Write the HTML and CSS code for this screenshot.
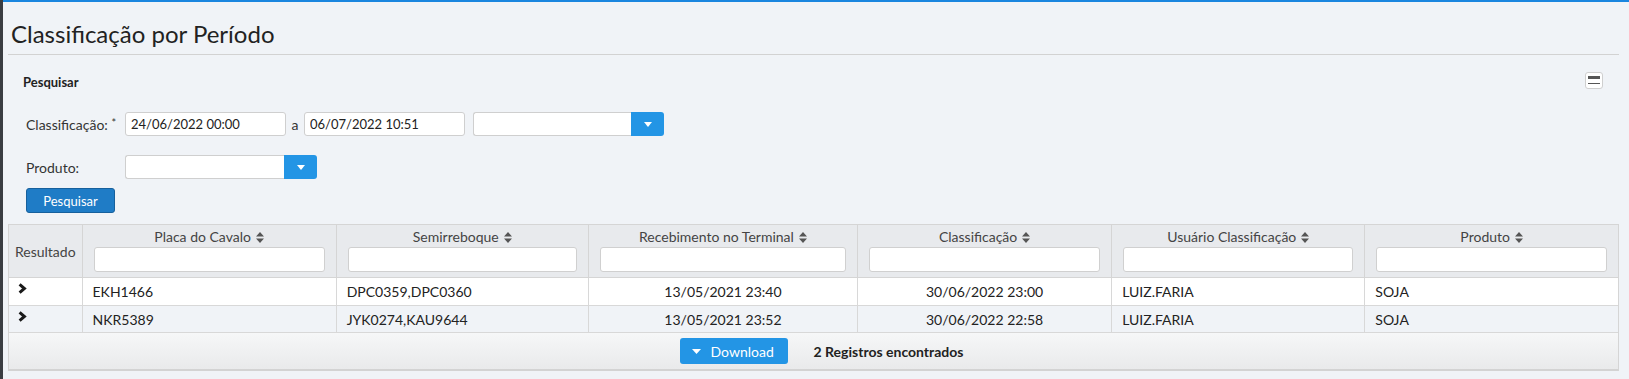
FILE: index.html
```html
<!DOCTYPE html>
<html lang="pt-BR">
<head>
<meta charset="utf-8">
<title>Classificação por Período</title>
<link rel="stylesheet" href="styles.css">
</head>
<body>
<div class="app">
  <div class="edge"></div>
  <div class="main">
    <h1 class="title">Classificação por Período</h1>
    <section class="panel">
      <div class="panel-head">
        <span class="panel-title">Pesquisar</span>
        <button class="toggle" type="button" aria-label="Recolher">
          <svg width="12" height="9" viewBox="0 0 12 9"><rect x="0" y="0" width="12" height="3" fill="#555"/><rect x="0" y="7" width="12" height="1" fill="#555"/></svg>
        </button>
      </div>
      <div class="form">
        <div class="form-row">
          <label class="lbl">Classificação: <sup>*</sup></label>
          <input class="field date" type="text" value="24/06/2022 00:00">
          <span class="sep">a</span>
          <input class="field date" type="text" value="06/07/2022 10:51">
          <div class="combo wide">
            <input class="field" type="text" value="">
            <button class="combo-btn" type="button"><svg width="8" height="5" viewBox="0 0 8 5"><path d="M0 0H8L4 5Z" fill="#fff"/></svg></button>
          </div>
        </div>
        <div class="form-row">
          <label class="lbl">Produto:</label>
          <div class="combo">
            <input class="field" type="text" value="">
            <button class="combo-btn" type="button"><svg width="8" height="5" viewBox="0 0 8 5"><path d="M0 0H8L4 5Z" fill="#fff"/></svg></button>
          </div>
        </div>
        <button class="btn-search" type="button">Pesquisar</button>
      </div>
    </section>

    <div class="grid">
      <table>
        <colgroup>
          <col style="width:73px"><col style="width:254px"><col style="width:252px"><col style="width:269px"><col style="width:254px"><col style="width:253px"><col style="width:253px">
        </colgroup>
        <thead>
          <tr>
            <th class="res">Resultado</th>
            <th><div class="th-label">Placa do Cavalo <svg class="sort" width="8" height="11" viewBox="0 0 8 11"><path d="M0 4.5H8L4 0Z M0 6.5H8L4 11Z" fill="#555"/></svg></div><input class="filter" type="text"></th>
            <th><div class="th-label">Semirreboque <svg class="sort" width="8" height="11" viewBox="0 0 8 11"><path d="M0 4.5H8L4 0Z M0 6.5H8L4 11Z" fill="#555"/></svg></div><input class="filter" type="text"></th>
            <th><div class="th-label">Recebimento no Terminal <svg class="sort" width="8" height="11" viewBox="0 0 8 11"><path d="M0 4.5H8L4 0Z M0 6.5H8L4 11Z" fill="#555"/></svg></div><input class="filter" type="text"></th>
            <th><div class="th-label">Classificação <svg class="sort" width="8" height="11" viewBox="0 0 8 11"><path d="M0 4.5H8L4 0Z M0 6.5H8L4 11Z" fill="#555"/></svg></div><input class="filter" type="text"></th>
            <th><div class="th-label">Usuário Classificação <svg class="sort" width="8" height="11" viewBox="0 0 8 11"><path d="M0 4.5H8L4 0Z M0 6.5H8L4 11Z" fill="#555"/></svg></div><input class="filter" type="text"></th>
            <th><div class="th-label">Produto <svg class="sort" width="8" height="11" viewBox="0 0 8 11"><path d="M0 4.5H8L4 0Z M0 6.5H8L4 11Z" fill="#555"/></svg></div><input class="filter" type="text"></th>
          </tr>
        </thead>
        <tbody>
          <tr class="odd">
            <td class="exp"><svg width="9" height="11" viewBox="0 0 9 11"><path d="M1.6 1.4L6.4 5.5L1.6 9.6" fill="none" stroke="#1a1a1a" stroke-width="3"/></svg></td>
            <td>EKH1466</td>
            <td>DPC0359,DPC0360</td>
            <td class="c">13/05/2021 23:40</td>
            <td class="c">30/06/2022 23:00</td>
            <td>LUIZ.FARIA</td>
            <td>SOJA</td>
          </tr>
          <tr class="even">
            <td class="exp"><svg width="9" height="11" viewBox="0 0 9 11"><path d="M1.6 1.4L6.4 5.5L1.6 9.6" fill="none" stroke="#1a1a1a" stroke-width="3"/></svg></td>
            <td>NKR5389</td>
            <td>JYK0274,KAU9644</td>
            <td class="c">13/05/2021 23:52</td>
            <td class="c">30/06/2022 22:58</td>
            <td>LUIZ.FARIA</td>
            <td>SOJA</td>
          </tr>
        </tbody>
      </table>
      <div class="grid-foot">
        <button class="btn-dl" type="button"><svg width="9" height="5" viewBox="0 0 9 5"><path d="M0 0H9L4.5 5Z" fill="#fff"/></svg>Download</button>
        <span class="count">2 Registros encontrados</span>
      </div>
    </div>
  </div>
</div>
</body>
</html>
```

FILE: styles.css
```css
* { box-sizing: border-box; }
html, body { margin: 0; padding: 0; }
body {
  background: #f0f3f7;
  font-family: Lato, "Liberation Sans", sans-serif;
  font-size: 13px;
  color: #333;
  width: 1629px;
  height: 379px;
  overflow: hidden;
}
.app { display: flex; height: 379px; }
.edge { width: 3px; flex: none; background: #3a3d42; }
.main {
  flex: 1;
  border-top: 2px solid #1a86df;
  padding: 0 10px 0 5px;
}
.title {
  margin: 0;
  font-weight: 400;
  font-size: 24px;
  line-height: 29px;
  color: #222;
  padding: 17px 0 6px 3px;
  border-bottom: 1px solid #d2d2d2;
}
.panel { padding: 0; }
.panel-head {
  display: flex;
  align-items: center;
  justify-content: space-between;
  padding: 17px 16px 0 15px;
  height: 36px;
}
.panel-title { font-weight: 700; font-size: 13px; color: #222; }
.toggle {
  width: 18px; height: 17px;
  padding: 0;
  border: 1px solid #cfcfcf;
  border-radius: 3px;
  background: #fff;
  display: flex; align-items: center; justify-content: center;
  margin-top: -2px;
}
.form { padding: 21px 0 0 18px; }
.form-row { display: flex; align-items: center; height: 24px; margin-bottom: 19px; }
.form-row + .form-row { margin-bottom: 9px; }
.lbl { width: 99px; flex: none; color: #333; font-size: 14px; }
.lbl sup { font-size: 11px; vertical-align: 3px; line-height: 0; }
.field {
  height: 24px;
  border: 1px solid #cfcfcf;
  border-radius: 3px;
  background: #fff;
  font-family: Lato, "Liberation Sans", sans-serif;
  font-size: 13px;
  color: #222;
  padding: 0 5px;
  outline: none;
}
.date { width: 161px; }
.sep { width: 18px; text-align: center; color: #333; font-size: 14px; }
.combo { display: flex; margin-left: 0; }
.combo.wide { margin-left: 8px; }
.combo .field { width: 159px; border-radius: 3px 0 0 3px; border-right: none; }
.combo.wide .field { width: 158px; }
.combo-btn {
  width: 33px; height: 24px;
  border: none;
  border-radius: 0 3px 3px 0;
  background: #2395e5;
  padding: 0;
  display: flex; align-items: center; justify-content: center;
}
.btn-search {
  height: 25px;
  width: 89px;
  background: #1f7cc6;
  border: 1px solid #17609c;
  border-radius: 3px;
  color: #fff;
  font-family: Lato, "Liberation Sans", sans-serif;
  font-size: 13px;
  padding: 0;
}
.grid {
  margin-top: 11px;
  border: 1px solid #d5d5d5;
  border-bottom: 2px solid #d3d3d3;
}
table { border-collapse: collapse; table-layout: fixed; width: 100%; }
th {
  background: #e8eaed;
  font-weight: 400;
  color: #444;
  font-size: 14px;
  padding: 4px 11px 5px;
  border-left: 1px solid #d5d5d5;
  border-bottom: 1px solid #d5d5d5;
  vertical-align: top;
}
th:first-child { border-left: none; }
th.res { vertical-align: middle; padding: 0 2px; text-align: center; }
.th-label { height: 16px; line-height: 16px; margin-bottom: 2px; display: flex; justify-content: center; align-items: center; gap: 5px; }
.sort { display: block; }
.filter {
  display: block;
  width: 100%;
  height: 25px;
  border: 1px solid #d0d0d0;
  border-radius: 3px;
  background: #fff;
  outline: none;
}
td {
  height: 27px;
  padding: 0 10px;
  border-left: 1px solid #d8d8d8;
  border-bottom: 1px solid #d8d8d8;
  color: #222;
  font-size: 14px;
  white-space: nowrap;
}
td:first-child { border-left: none; }
td.c { text-align: center; }
tr.odd td { background: #fff; }
tr.even td { background: #f0f3f7; }
tr.odd td { height: 28px; }
td.exp { padding: 0 0 0 9px; vertical-align: top; padding-top: 5px; }
td.exp svg { display: block; }
.grid-foot {
  height: 36px;
  display: flex;
  align-items: center;
  justify-content: center;
  gap: 26px;
  background: linear-gradient(#f6f7f8, #e9eaeb);
  padding-left: 16px;
}
.btn-dl {
  height: 26px;
  width: 108px;
  border: none;
  border-radius: 3px;
  background: #2395e5;
  color: #fff;
  font-family: Lato, "Liberation Sans", sans-serif;
  font-size: 14px;
  display: flex;
  align-items: center;
  gap: 10px;
  padding: 0 0 0 12px;
}
.count { font-weight: 700; color: #222; font-size: 14px; }
```
